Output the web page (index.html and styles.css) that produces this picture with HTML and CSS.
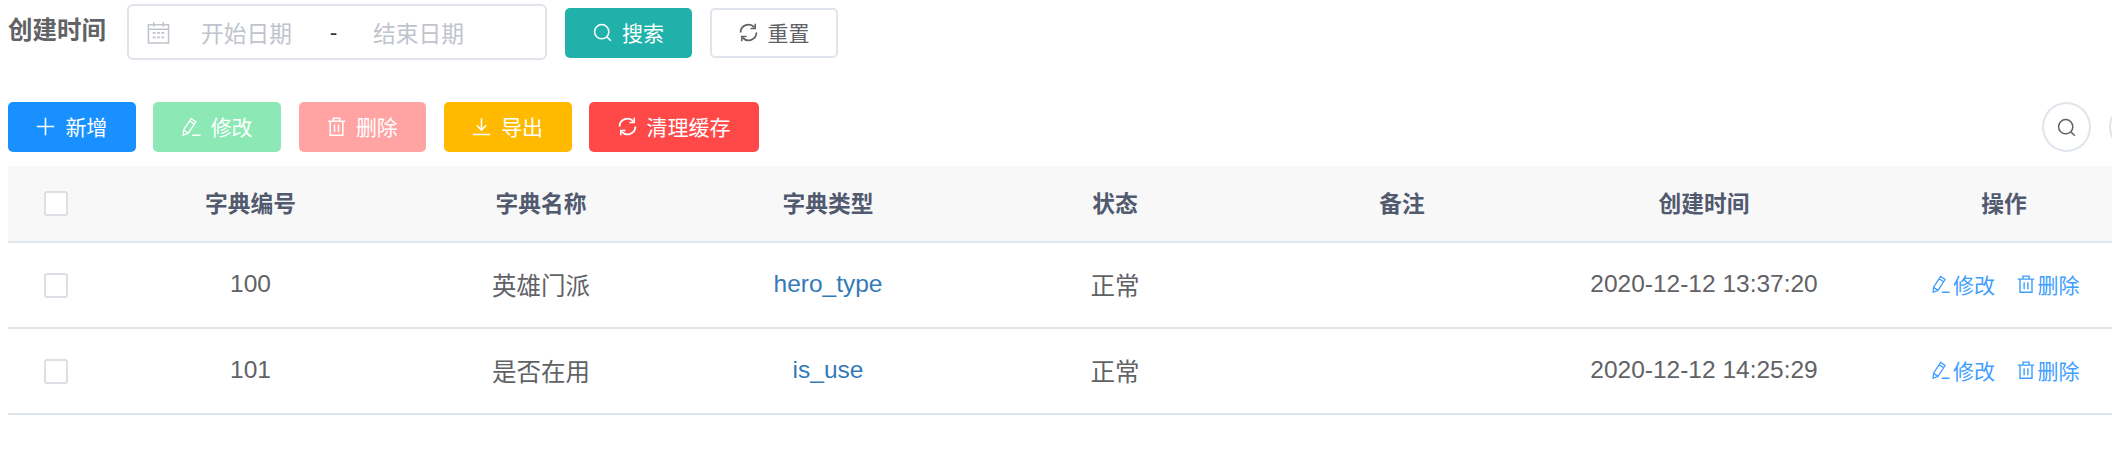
FILE: index.html
```html
<!DOCTYPE html>
<html lang="zh">
<head>
<meta charset="utf-8">
<title>字典管理</title>
<link rel="stylesheet" href="styles.css">
</head>
<body>
<div class="page">
  <form class="search">
    <span class="search-label">创建时间</span>
    <div class="range">
      <svg class="cal" viewBox="0 0 24 24"><path d="M1.500 4h21v19h-21zM1.500 8.500h21M7 1v5M17 1v5" fill="none" stroke="currentColor" stroke-width="1.600"/><path d="M6 12.500h3M10.500 12.500h3M15 12.500h3M6 17h3M10.500 17h3M15 17h3" fill="none" stroke="currentColor" stroke-width="1.800"/></svg>
      <span class="range-val">开始日期</span>
      <span class="range-sep">-</span>
      <span class="range-val">结束日期</span>
    </div>
    <button type="button" class="btn btn-search"><svg class="ico" viewBox="0 0 24 24"><use href="#i-search"/></svg>搜索</button>
    <button type="button" class="btn btn-reset"><svg class="ico" viewBox="0 0 24 24"><use href="#i-refresh"/></svg>重置</button>
  </form>
  <div class="toolbar">
    <div class="actions">
      <button type="button" class="btn btn-blue"><svg class="ico" viewBox="0 0 24 24"><use href="#i-plus"/></svg>新增</button>
      <button type="button" class="btn btn-green"><svg class="ico" viewBox="0 0 24 24"><use href="#i-edit"/></svg>修改</button>
      <button type="button" class="btn btn-pink"><svg class="ico" viewBox="0 0 24 24"><use href="#i-del"/></svg>删除</button>
      <button type="button" class="btn btn-yellow"><svg class="ico" viewBox="0 0 24 24"><use href="#i-down"/></svg>导出</button>
      <button type="button" class="btn btn-red"><svg class="ico" viewBox="0 0 24 24"><use href="#i-refresh"/></svg>清理缓存</button>
    </div>
    <div class="tools">
      <span class="circle"><svg class="ico" viewBox="0 0 24 24"><use href="#i-search"/></svg></span>
      <span class="circle"></span>
    </div>
  </div>
  <table class="table">
    <colgroup>
      <col class="c0"><col class="c1"><col class="c2"><col class="c3"><col class="c4"><col class="c5"><col class="c6"><col class="c7">
    </colgroup>
    <thead>
      <tr><th class="check"><span class="box"></span></th><th>字典编号</th><th>字典名称</th><th>字典类型</th><th>状态</th><th>备注</th><th>创建时间</th><th>操作</th></tr>
    </thead>
    <tbody>
      <tr><td class="check"><span class="box"></span></td><td>100</td><td>英雄门派</td><td><a class="link">hero_type</a></td><td>正常</td><td></td><td>2020-12-12 13:37:20</td>
        <td><span class="ops"><a class="op"><svg class="ico-op" viewBox="0 0 24 24"><use href="#i-edit"/></svg>修改</a><a class="op"><svg class="ico-op" viewBox="0 0 24 24"><use href="#i-del"/></svg>删除</a></span></td></tr>
      <tr><td class="check"><span class="box"></span></td><td>101</td><td>是否在用</td><td><a class="link">is_use</a></td><td>正常</td><td></td><td>2020-12-12 14:25:29</td>
        <td><span class="ops"><a class="op"><svg class="ico-op" viewBox="0 0 24 24"><use href="#i-edit"/></svg>修改</a><a class="op"><svg class="ico-op" viewBox="0 0 24 24"><use href="#i-del"/></svg>删除</a></span></td></tr>
    </tbody>
  </table>
</div>
<svg class="defs" aria-hidden="true">
  <defs>
    <g id="i-search" fill="none" stroke="currentColor" stroke-width="1.900"><circle cx="11" cy="11" r="9"/><path d="M17.500 17.500l5 5"/></g>
    <g id="i-plus" fill="none" stroke="currentColor" stroke-width="2"><path d="M12 1v22M1 12h22"/></g>
    <g id="i-edit" fill="none" stroke="currentColor" stroke-width="1.700"><path d="M2 16.500L11.500 2l6 4-9.500 14.500-6.500 2.500zM9.500 5l6 4M2 16.500l6 4M13 23h10.500"/></g>
    <g id="i-del" fill="none" stroke="currentColor" stroke-width="1.900"><path d="M1 5.500h22M8 5.500V1.500h8v4M4 5.500V23h16V5.500M9.500 9.500v9.500M14.500 9.500v9.500"/></g>
    <g id="i-down" fill="none" stroke="currentColor" stroke-width="2"><path d="M12 2v14M6 10.500l6 6 6-6M1 22h22"/></g>
    <g id="i-refresh" fill="none" stroke="currentColor" stroke-width="2.200"><path d="M2 12A10 10 0 0 1 19.500 5.500M22 12A10 10 0 0 1 4.500 18.500"/><path d="M20.500 1v6h-6M3.500 23v-6h6" stroke-width="2"/></g>
  </defs>
</svg>
</body>
</html>
```

FILE: styles.css
```css
* { box-sizing: border-box; }
html, body { margin: 0; padding: 0; background: #fff; overflow: hidden; }
body { width: 2112px; height: 456px; font-family: "Liberation Sans", "Noto Sans CJK SC", sans-serif; color: #606266; }
.defs { width: 0; height: 0; display: block; }
.page { padding: 4px 0 0 8px; width: 2145px; }
.search { display: flex; align-items: flex-start; height: 56px; }
.search-label { font-size: 24.500px; line-height: 54px; font-weight: 700; color: #606266; width: 119px; flex: none; }
.range { display: flex; align-items: center; width: 420px; height: 56px; border: 2px solid #dfe4ed; border-radius: 6px; padding-left: 18px; font-size: 22.750px; color: #c0c4cc; flex: none; margin-right: 18px; }
.cal { width: 23px; height: 23px; color: #c0c4cc; flex: none; margin-right: 31px; }
.range-val { width: 93px; flex: none; }
.range-sep { color: #303133; width: 79px; flex: none; text-align: center; }
.btn { display: inline-flex; align-items: center; justify-content: center; width: 127.750px; height: 50px; border: 0; border-radius: 5px; font-family: inherit; font-size: 21px; color: #fff; padding: 0 0 2px; flex: none; }
.btn .ico { margin-right: 10px; }
.ico { width: 19px; height: 19px; flex: none; }
.search .btn { margin-top: 4px; }
.btn-search { background: #20b2aa; margin-right: 18px; }
.search .btn-search { width: 127px; }
.search .btn-reset { width: 128px; }
.btn-reset { background: #fff; border: 2px solid #dfe4ed; color: #606266; }
.toolbar { display: flex; justify-content: space-between; margin: 42px 0 14px; }
.actions { display: flex; gap: 17.500px; }
.actions .btn-red { width: 170px; }
.btn-blue { background: #1890ff; }
.btn-green { background: #8ce8b5; }
.btn-pink { background: #ffa3a3; }
.btn-yellow { background: #ffba00; }
.btn-red { background: #ff4949; }
.tools { display: flex; gap: 18px; width: 103px; flex: none; }
.circle { display: flex; align-items: center; justify-content: center; width: 49px; height: 50px; border: 2px solid #dfe4ed; border-radius: 50%; color: #606266; flex: none; }
.table { width: 2137px; border-collapse: collapse; table-layout: fixed; font-size: 24.500px; }
.c0 { width: 96px; } .c1 { width: 293px; } .c2 { width: 288px; } .c3 { width: 286px; } .c4 { width: 288px; } .c5 { width: 286px; } .c6 { width: 318px; } .c7 { width: 282px; }
th { height: 76px; background: #f8f8f9; font-size: 22.750px; font-weight: 700; color: #515a6e; border-bottom: 2px solid #dfe6ec; text-align: center; padding: 0 0 2px; }
td { height: 86px; text-align: center; border-bottom: 2px solid #dfe6ec; padding: 0 0 2px; color: #606266; }
th.check, td.check { padding: 0; }
.box { display: block; width: 24px; height: 25px; margin: 0 auto; border: 2px solid #dcdfe6; border-radius: 3px; background: #fff; }
.link { color: #337ab7; }
.ops { display: inline-flex; gap: 21.500px; margin-left: 3.500px; }
.op { display: inline-flex; align-items: center; color: #409eff; font-size: 21px; }
.ico-op { width: 18px; height: 18px; margin-right: 3px; flex: none; }
```
